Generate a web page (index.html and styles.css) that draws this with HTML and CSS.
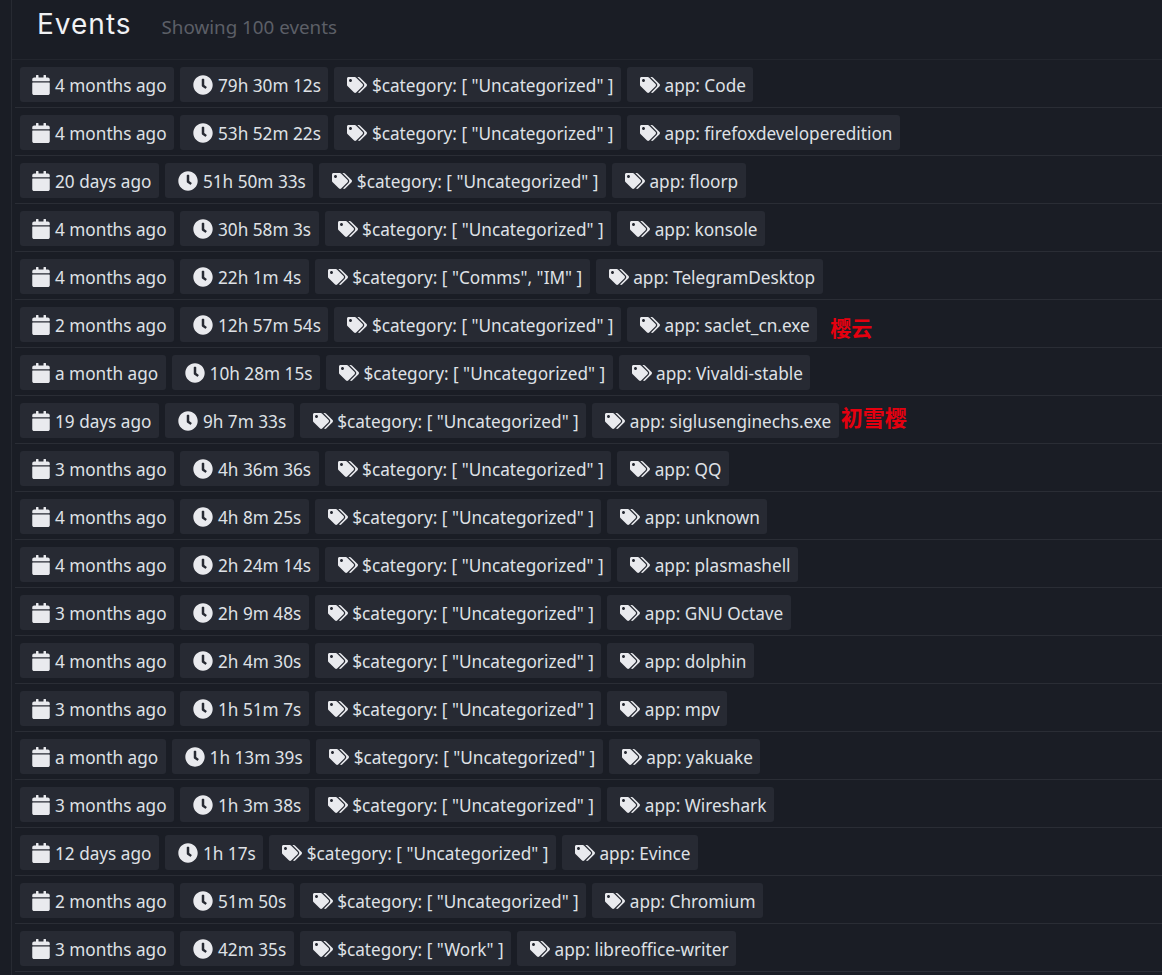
FILE: index.html
```html
<!DOCTYPE html>
<html lang="en">
<head>
	<meta charset="utf-8">
	<title>Events</title>
	<link rel="stylesheet" href="styles.css">
</head>
<body>
	<svg class="defs" width="0" height="0">
		<symbol id="calendar" viewBox="0 0 448 512"><path d="M12 192h424c6.600 0 12 5.400 12 12v260c0 26.500-21.500 48-48 48H48c-26.500 0-48-21.500-48-48V204c0-6.600 5.400-12 12-12zm436-44v-36c0-26.500-21.500-48-48-48h-48V12c0-6.600-5.400-12-12-12h-40c-6.600 0-12 5.400-12 12v52H160V12c0-6.600-5.400-12-12-12h-40c-6.600 0-12 5.400-12 12v52H48C21.500 64 0 85.500 0 112v36c0 6.600 5.400 12 12 12h424c6.600 0 12-5.400 12-12z"/></symbol>
		<symbol id="clock" viewBox="0 0 512 512"><path d="M256 8C119 8 8 119 8 256s111 248 248 248 248-111 248-248S393 8 256 8zm92.490 313l-20 25a16 16 0 0 1-22.490 2.500l-67-49.720a40 40 0 0 1-15-31.230V112a16 16 0 0 1 16-16h32a16 16 0 0 1 16 16v144l58 42.500a16 16 0 0 1 2.490 22.500z"/></symbol>
		<symbol id="tags" viewBox="0 0 640 512"><path d="M497.941 225.941L286.059 14.059A48 48 0 0 0 252.118 0H48C21.490 0 0 21.490 0 48v204.118a48 48 0 0 0 14.059 33.941l211.882 211.882c18.744 18.745 49.136 18.746 67.882 0l204.118-204.118c18.745-18.745 18.745-49.137 0-67.882zM112 160c-26.510 0-48-21.490-48-48s21.490-48 48-48 48 21.490 48 48-21.490 48-48 48zm513.941 133.823L421.823 497.941c-18.745 18.745-49.137 18.745-67.882 0l-.36-.36L527.640 323.522c16.999-16.999 26.360-39.600 26.360-63.640s-9.362-46.641-26.360-63.640L331.397 0h48.721a48 48 0 0 1 33.941 14.059l211.882 211.882c18.745 18.745 18.745 49.137 0 67.882z"/></symbol>
	</svg>
	<div class="page">
		<div class="header">
			<h1>Events</h1>
			<span class="count">Showing 100 events</span>
		</div>
		<div id="list" class="eventList"></div>
	</div>
	<script src="events.js"></script>
</body>
</html>
```

FILE: styles.css
```css
* {margin:0; padding:0; box-sizing:border-box;}
html, body {height:100%; overflow:hidden;}
body {background:#1a1d25; color:#dfe1e6; font-family:"Noto Sans", "Open Sans", sans-serif; font-size:17.2px;}
.defs {display:block; height:0;}
.page {margin-left:11px; height:100%; border-left:1px solid #272a32;}
.header {display:flex; align-items:baseline; padding:5px 0 0 25px; height:60px; border-bottom:1px solid #23262e;}
.header h1 {font-family:"Inter", "Noto Sans", sans-serif; font-size:28px; font-weight:400; letter-spacing:1px; line-height:38px; color:#f0f1f4;}
.header .count {margin-left:30px; font-size:18.8px; color:#5c5f67;}
.eventRow {display:flex; gap:6px; margin-left:3px; padding:7px 0 0 5px; height:48px; border-bottom:1px solid #2a2d35; align-items:flex-start; white-space:nowrap;}
.badge {display:flex; align-items:center; height:35px; padding:2px 7.5px 0 12px; background:#272a33; border-radius:3px;}
.badge svg {flex:none; margin-top:-2px; margin-right:5px; fill:#e9eaee;}
.badge .iconCalendar {width:18px; height:20px;}
.badge .iconClock {width:20px; height:20px; margin-left:1px;}
.badge .iconTags {width:20px; height:16px; margin-left:1px; margin-right:4.5px;}
.note {color:#e5000f; font-family:"Noto Sans CJK SC", sans-serif; font-weight:700; line-height:35px;}
.note.small {margin-left:7px; margin-top:3px; font-size:21px;}
.note.large {margin-left:-4px; margin-top:-4px; font-size:22px;}
```

FILE: events.js
```js
var events = [
	["4 months ago", "79h 30m 12s", '[ "Uncategorized" ]', "Code"],
	["4 months ago", "53h 52m 22s", '[ "Uncategorized" ]', "firefoxdeveloperedition"],
	["20 days ago", "51h 50m 33s", '[ "Uncategorized" ]', "floorp"],
	["4 months ago", "30h 58m 3s", '[ "Uncategorized" ]', "konsole"],
	["4 months ago", "22h 1m 4s", '[ "Comms", "IM" ]', "TelegramDesktop"],
	["2 months ago", "12h 57m 54s", '[ "Uncategorized" ]', "saclet_cn.exe", "樱云", "small"],
	["a month ago", "10h 28m 15s", '[ "Uncategorized" ]', "Vivaldi-stable"],
	["19 days ago", "9h 7m 33s", '[ "Uncategorized" ]', "siglusenginechs.exe", "初雪樱", "large"],
	["3 months ago", "4h 36m 36s", '[ "Uncategorized" ]', "QQ"],
	["4 months ago", "4h 8m 25s", '[ "Uncategorized" ]', "unknown"],
	["4 months ago", "2h 24m 14s", '[ "Uncategorized" ]', "plasmashell"],
	["3 months ago", "2h 9m 48s", '[ "Uncategorized" ]', "GNU Octave"],
	["4 months ago", "2h 4m 30s", '[ "Uncategorized" ]', "dolphin"],
	["3 months ago", "1h 51m 7s", '[ "Uncategorized" ]', "mpv"],
	["a month ago", "1h 13m 39s", '[ "Uncategorized" ]', "yakuake"],
	["3 months ago", "1h 3m 38s", '[ "Uncategorized" ]', "Wireshark"],
	["12 days ago", "1h 17s", '[ "Uncategorized" ]', "Evince"],
	["2 months ago", "51m 50s", '[ "Uncategorized" ]', "Chromium"],
	["3 months ago", "42m 35s", '[ "Work" ]', "libreoffice-writer"]
];

function badge(icon, cls, text){
	return '<div class="badge"><svg class="' + cls + '"><use href="#' + icon + '"></use></svg>' + text + '</div>';
}

var html = "";
for (var i = 0; i < events.length; i++) {
	var e = events[i];
	html += '<div class="eventRow">';
	html += badge("calendar", "iconCalendar", e[0]);
	html += badge("clock", "iconClock", e[1]);
	html += badge("tags", "iconTags", "$category: " + e[2]);
	html += badge("tags", "iconTags", "app: " + e[3]);
	if (e[4]) {
		html += '<span class="note ' + e[5] + '">' + e[4] + '</span>';
	}
	html += '</div>';
}
document.getElementById("list").innerHTML = html;
```
